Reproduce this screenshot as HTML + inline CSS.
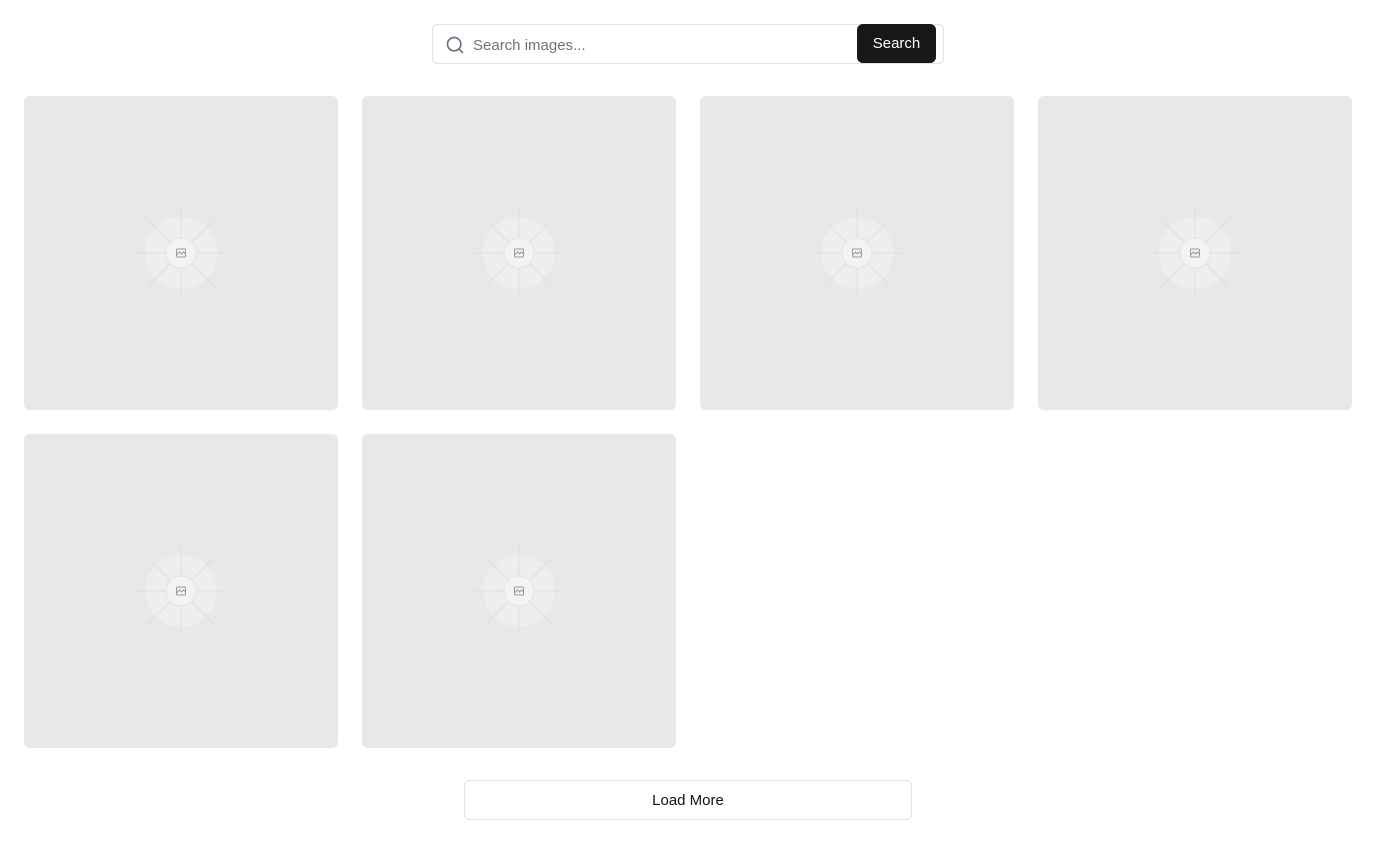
<!DOCTYPE html>
<html><head><style>
*{box-sizing:border-box;margin:0;padding:0}
body{width:1376px;height:844px;background:#fff;font-family:"Liberation Sans",sans-serif;position:relative;overflow:hidden}
.search{position:absolute;left:432px;top:24px;width:512px;height:40px;border:1px solid #e2e2e2;border-radius:6px}
.search svg{position:absolute;left:12px;top:10px}
.search .ph{position:absolute;left:40px;top:12px;font-size:15px;color:#71717a}
.btn{position:absolute;left:424px;top:-1px;width:79px;height:39px;background:#18181b;color:#fff;border-radius:6px;font-size:15px;text-align:center;line-height:40px}
.card{position:absolute;width:314px;height:314px;background:#e8e8e8;border-radius:6px}
.card svg{position:absolute;left:107px;top:107px}
.more{position:absolute;left:464px;top:780px;width:448px;height:40px;border:1px solid #e2e2e2;border-radius:6px;text-align:center;line-height:40px;font-size:15px;color:#111}
</style></head><body>
<div class="search">
<svg width="20" height="20" viewBox="0 0 24 24" fill="none" stroke="#6b7280" stroke-width="2" stroke-linecap="round"><circle cx="11" cy="11" r="8"/><path d="M21 21l-4.3-4.3"/></svg>
<div class="ph">Search images...</div>
<div class="btn">Search</div>
</div>
<div id="g"></div>
<script>
const pos=[[24,96],[362,96],[700,96],[1038,96],[24,434],[362,434]];
const icon=`<svg width="100" height="100" viewBox="0 0 100 100"><circle cx="50" cy="50" r="36" fill="#eeeeee"/><g stroke="#dedede" stroke-width="1" fill="none"><line x1="50" y1="5" x2="50" y2="95"/><line x1="5" y1="50" x2="95" y2="50"/><line x1="16" y1="16" x2="84" y2="84"/><line x1="84" y1="16" x2="16" y2="84"/></g><circle cx="50" cy="50" r="15" fill="#f3f3f3" stroke="#e3e3e3"/><g stroke="#9a9a9a" stroke-width="1" fill="none"><rect x="45.5" y="46" width="9" height="8" rx="1"/><path d="M45.5 52l3-3 2 2 2-2 2 2"/></g></svg>`;
document.getElementById('g').innerHTML=pos.map(p=>`<div class="card" style="left:${p[0]}px;top:${p[1]}px">${icon}</div>`).join('');
</script>
<div class="more">Load More</div>
</body></html>
